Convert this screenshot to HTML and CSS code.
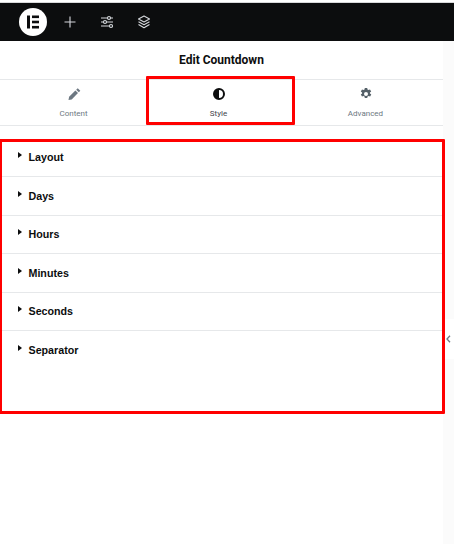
FILE: index.html
```html
<!DOCTYPE html>
<html lang="en">
<head>
<meta charset="utf-8">
<title>Edit Countdown</title>
<link rel="stylesheet" href="styles.css">
</head>
<body>
<div class="app">
  <header class="topbar">
    <span class="logo">
      <svg width="28" height="28" viewBox="0 0 28 28"><circle cx="14" cy="14" r="14" fill="#fff"/><rect x="8" y="7.500" width="3" height="13" fill="#0c0d0e"/><rect x="13" y="7.500" width="7" height="2.600" fill="#0c0d0e"/><rect x="13" y="12.700" width="7" height="2.600" fill="#0c0d0e"/><rect x="13" y="17.900" width="7" height="2.600" fill="#0c0d0e"/></svg>
    </span>
    <svg class="tool" width="12" height="12" viewBox="0 0 12 12"><path d="M6 .5v11M.5 6h11" stroke="#d5d8dc" stroke-width="1.100" fill="none"/></svg>
    <svg class="tool" width="14" height="14" viewBox="0 0 14 14" fill="none" stroke="#d5d8dc" stroke-width="1.200"><path d="M1 3h6.500M10.500 3H13M1 7h2.500M6.500 7H13M1 11h8.500M12.500 11H13"/><circle cx="9" cy="3" r="1.500"/><circle cx="5" cy="7" r="1.500"/><circle cx="11" cy="11" r="1.500"/></svg>
    <svg class="tool" width="14" height="14" viewBox="0 0 14 14" fill="none" stroke="#d5d8dc" stroke-width="1.100" stroke-linejoin="round"><path d="M7 1l5.500 3L7 7 1.500 4zM1.500 6.800L7 9.800l5.500-3M1.500 9.500L7 12.800l5.500-3.300"/></svg>
  </header>
  <div class="main">
    <aside class="panel">
      <h1 class="title">Edit Countdown</h1>
      <nav class="tabs">
        <div class="tab">
          <svg class="tab-icon" width="14" height="14" viewBox="0 0 14 14"><path d="M1.500 13l.6-3.200 6.300-6.300 2.600 2.600-6.300 6.300z" fill="#6d7882"/><path d="M9.200 2.700l1.500-1.500 2.600 2.600-1.500 1.500z" fill="#6d7882"/></svg>
          <span>Content</span>
        </div>
        <div class="tab active">
          <svg class="tab-icon" width="14" height="14" viewBox="0 0 14 14"><circle cx="7" cy="7" r="5" fill="#fff" stroke="#0c0d0e" stroke-width="2"/><path d="M7 2a5 5 0 0 0 0 10z" fill="#0c0d0e"/></svg>
          <span>Style</span>
        </div>
        <div class="tab">
          <svg class="tab-icon" width="14" height="14" viewBox="0 0 14 14"><path fill="#556068" fill-rule="evenodd" d="M5.800 1h2.400l.3 1.600 1 .5 1.500-.7 1.200 2-1.300 1 .1 1.200 1.300 1-1.200 2-1.500-.6-1 .6-.4 1.400H5.800l-.3-1.500-1-.5-1.500.6-1.200-2 1.300-1V5.400l-1.300-1 1.200-2 1.500.7 1-.6zM7 5a2 2 0 1 0 0 4 2 2 0 0 0 0-4z"/></svg>
          <span>Advanced</span>
        </div>
      </nav>
      <ul class="sections">
        <li class="section"><span class="caret"></span>Layout</li>
        <li class="section"><span class="caret"></span>Days</li>
        <li class="section"><span class="caret"></span>Hours</li>
        <li class="section"><span class="caret"></span>Minutes</li>
        <li class="section"><span class="caret"></span>Seconds</li>
        <li class="section"><span class="caret"></span>Separator</li>
      </ul>
    </aside>
    <div class="rail">
      <span class="collapse">
        <svg width="5" height="8" viewBox="0 0 5 8"><path d="M4 .8L1 4l3 3.200" fill="none" stroke="#6d7882" stroke-width="1.300"/></svg>
      </span>
    </div>
  </div>
  <div class="mark mark-tab"></div>
  <div class="mark mark-list"></div>
</div>
</body>
</html>
```
FILE: styles.css
```css
* { box-sizing: border-box; }
html, body { margin: 0; height: 100%; overflow: hidden; background: #fff; }
body { font-family: Roboto, "Liberation Sans", sans-serif; }
.app { position: relative; width: 454px; height: 544px; padding-top: 2px; display: flex; flex-direction: column; }
.topbar { height: 39px; background: #0c0d0e; border-top: 1px solid #d8d9da; display: flex; align-items: center; padding-left: 19px; flex: none; }
.logo { display: flex; width: 28px; margin-right: 17px; }
.tool { flex: none; margin-right: 23.500px; }
.main { flex: 1; display: flex; }
.panel { width: 443px; flex: none; background: #fff; }
.rail { flex: 1; background: #fbfbfb; position: relative; }
.collapse { position: absolute; left: 0; top: 278px; width: 11px; height: 40px; background: #fff; display: flex; align-items: center; justify-content: center; padding-right: 1px; }
.title { margin: 0; height: 39px; border-bottom: 1px solid #e6e8ea; font-size: 12px; font-weight: 700; line-height: 38px; text-align: center; color: #0c0d0e; }
.tabs { display: flex; height: 46px; border-bottom: 1px solid #e6e8ea; padding: 0 5px 0 1px; }
.tab { flex: 1; display: flex; flex-direction: column; align-items: center; padding-top: 7px; font-size: 8px; color: #6d7882; }
.tab-icon { margin-bottom: 8px; }
.tab.active { color: #3f444b; margin-right: 2px; }
.sections { margin: 12.500px 0 0; padding: 0; list-style: none; }
.section { height: 38.500px; border-bottom: 1px solid #e6e8ea; padding-left: 18px; display: flex; align-items: center; font-family: "Liberation Sans", sans-serif; font-size: 10.700px; font-weight: 700; color: #0c0d0e; }
.section:last-child { border-bottom: 0; }
.caret { width: 0; height: 0; border-left: 4px solid #0c0d0e; border-top: 3.500px solid transparent; border-bottom: 3.500px solid transparent; margin-right: 6.500px; margin-top: -4px; }
.mark { position: absolute; border: 3px solid #f00; border-radius: 1px; pointer-events: none; }
.mark-tab { left: 146px; top: 76px; width: 149px; height: 49px; }
.mark-list { left: -1px; top: 139px; width: 446px; height: 275px; }
```
